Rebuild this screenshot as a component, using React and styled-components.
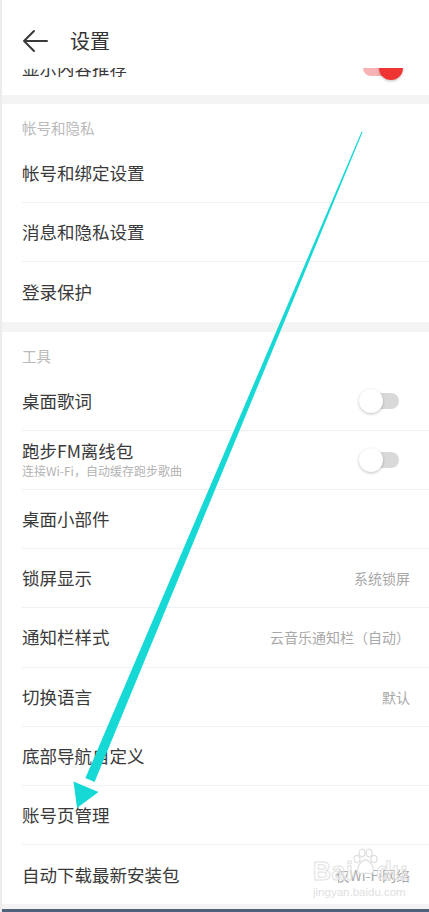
import React from "react";
import styled, { createGlobalStyle } from "styled-components";

const GlobalStyle = createGlobalStyle`
  html, body {
    margin: 0;
    padding: 0;
    background: #ffffff;
  }
  body {
    font-family: "Noto Sans CJK SC", "Noto Sans", sans-serif;
    -webkit-font-smoothing: antialiased;
  }
`;

const accountRows = [
  { label: "帐号和绑定设置" },
  { label: "消息和隐私设置" },
  { label: "登录保护" },
];

const toolRows = [
  { label: "桌面歌词", toggle: "off" },
  { label: "跑步FM离线包", sub: "连接Wi-Fi，自动缓存跑步歌曲", toggle: "off" },
  { label: "桌面小部件" },
  { label: "锁屏显示", value: "系统锁屏" },
  { label: "通知栏样式", value: "云音乐通知栏（自动）" },
  { label: "切换语言", value: "默认" },
  { label: "底部导航自定义" },
  { label: "账号页管理" },
  { label: "自动下载最新安装包", value: "仅Wi-Fi网络" },
];

function App() {
  return (
    <>
      <GlobalStyle />
      <Page>
        <TopBar>
          <svg width="26" height="24" viewBox="0 0 26 24" fill="none">
            <path
              d="M25 12H2M12 2L2 12l10 10"
              stroke="#3a3a3a"
              strokeWidth="2"
              strokeLinecap="round"
              strokeLinejoin="round"
            />
          </svg>
          <Title>设置</Title>
        </TopBar>

        {/* row scrolled under the top bar, only its lower edge shows */}
        <Peek>
          <Row $peek>
            <Label>显示内容推荐</Label>
            <Toggle $on />
          </Row>
        </Peek>

        <Band $h={9} />
        <SectionHeader>帐号和隐私</SectionHeader>
        <Section>
          {accountRows.map(({ label }) => (
            <Row key={label}>
              <Label>{label}</Label>
            </Row>
          ))}
        </Section>

        <Band $h={10} />
        <SectionHeader>工具</SectionHeader>
        <Section>
          {toolRows.map(({ label, sub, value, toggle }) => (
            <Row key={label}>
              <LabelBox>
                <Label>{label}</Label>
                {sub && <Sub>{sub}</Sub>}
              </LabelBox>
              {value && <Value>{value}</Value>}
              {toggle && <Toggle $on={toggle === "on"} />}
            </Row>
          ))}
        </Section>

        <Band $h={5} />
        <FrameEdge />

        <Watermark>
          <BrandLine>
            <span>Bai</span>
            <svg width="26" height="28" viewBox="0 0 26 28" fill="none">
              <g stroke="#e0e0e0" strokeWidth="1.3" fill="#ffffff">
                <ellipse cx="5" cy="11" rx="3" ry="3.6" />
                <ellipse cx="10" cy="5" rx="3" ry="3.8" />
                <ellipse cx="17" cy="5" rx="3" ry="3.8" />
                <ellipse cx="22" cy="11" rx="3" ry="3.6" />
                <path d="M13.5 12c-4 0-8 6-8 10 0 3 3 4 5 3.5 2-.5 4-.5 6 0 2 .5 5-.5 5-3.5 0-4-4-10-8-10z" />
              </g>
            </svg>
            <span>du</span>
          </BrandLine>
          <Site>jingyan.baidu.com</Site>
        </Watermark>

        <Annotation width="429" height="912" viewBox="0 0 429 912">
          <polygon
            points="362.5,132.2 94.6,781.9 85.4,778.1 361.5,131.8"
            fill="#16d8d5"
          />
          <polygon points="73.5,781.5 98.5,792 77,808" fill="#16d8d5" />
        </Annotation>
      </Page>
    </>
  );
}

function Toggle({ $on }) {
  return (
    <Switch $on={$on}>
      <Knob $on={$on} />
    </Switch>
  );
}

export default App;

const Page = styled.div`
  position: relative;
  height: 912px;
  overflow: hidden;
  background: #ffffff;
  border-left: 2px solid #ececec;
  box-sizing: border-box;
  display: flex;
  flex-direction: column;
`;

const TopBar = styled.div`
  height: 54px;
  margin-top: 14px;
  flex-shrink: 0;
  display: flex;
  align-items: center;
  padding-left: 20px;
  gap: 22px;
`;

const Title = styled.div`
  font-size: 20px;
  color: #333333;
  line-height: 26px;
`;

const Peek = styled.div`
  height: 27px;
  flex-shrink: 0;
  overflow: hidden;
  display: flex;
  flex-direction: column;
  justify-content: flex-end;
`;

const Band = styled.div`
  height: ${(p) => p.$h}px;
  flex-shrink: 0;
  background: #f4f4f4;
`;

const SectionHeader = styled.div`
  height: 40px;
  flex-shrink: 0;
  box-sizing: border-box;
  padding: 15px 0 0 20px;
  font-size: 14.5px;
  line-height: 18px;
  color: #b9b9b9;
`;

const Section = styled.div`
  display: flex;
  flex-direction: column;
`;

const Row = styled.div`
  height: ${(p) => (p.$peek ? "55px" : "59.2px")};
  flex-shrink: 0;
  box-sizing: border-box;
  margin-left: 20px;
  padding-right: 19px;
  display: flex;
  align-items: center;
  justify-content: space-between;
  border-bottom: ${(p) => (p.$peek ? "none" : "1px solid #f1f1f1")};

  &:last-child {
    border-bottom: none;
  }
`;

const LabelBox = styled.div`
  display: flex;
  flex-direction: column;
`;

const Label = styled.div`
  font-size: 17.5px;
  line-height: 22px;
  color: #3a3a3a;
`;

const Sub = styled.div`
  font-size: 12px;
  line-height: 16px;
  color: #b3b3b3;
  margin-top: 1px;
`;

const Value = styled.div`
  font-size: 14px;
  line-height: 18px;
  color: #a8a8a8;
`;

const Switch = styled.div`
  position: relative;
  width: 44px;
  height: 24px;
  margin-right: 7px;
  display: flex;
  align-items: center;
  justify-content: ${(p) => (p.$on ? "flex-end" : "flex-start")};

  &::before {
    content: "";
    position: absolute;
    left: 4px;
    right: 4px;
    top: 4px;
    height: 16px;
    border-radius: 8px;
    background: ${(p) => (p.$on ? "#f7b3b3" : "#d9d9d9")};
  }
`;

const Knob = styled.div`
  position: relative;
  width: 24px;
  height: 24px;
  border-radius: 50%;
  background: ${(p) => (p.$on ? "#ef3434" : "#ffffff")};
  box-shadow: 0 1px 3px rgba(0, 0, 0, 0.25);
`;

const FrameEdge = styled.div`
  height: 3px;
  flex-shrink: 0;
  background: #4f627a;
`;

const Watermark = styled.div`
  position: absolute;
  left: 311px;
  top: 848px;
  display: flex;
  flex-direction: column;
  pointer-events: none;
`;

const BrandLine = styled.div`
  display: flex;
  align-items: flex-end;
  font-family: "Liberation Sans", Arial, sans-serif;
  font-weight: 700;
  font-size: 25px;
  line-height: 26px;
  color: rgba(255, 255, 255, 0.3);
  -webkit-text-stroke: 1px #e2e2e2;
  letter-spacing: 0.5px;

  svg {
    margin: 0 -2px 8px -1px;
  }
`;

const Site = styled.div`
  font-family: "Liberation Sans", Arial, sans-serif;
  font-size: 11.5px;
  line-height: 14px;
  color: #e0e0e0;
  margin-top: 1px;
`;

const Annotation = styled.svg`
  position: absolute;
  left: -2px;
  top: 0;
  pointer-events: none;
`;
